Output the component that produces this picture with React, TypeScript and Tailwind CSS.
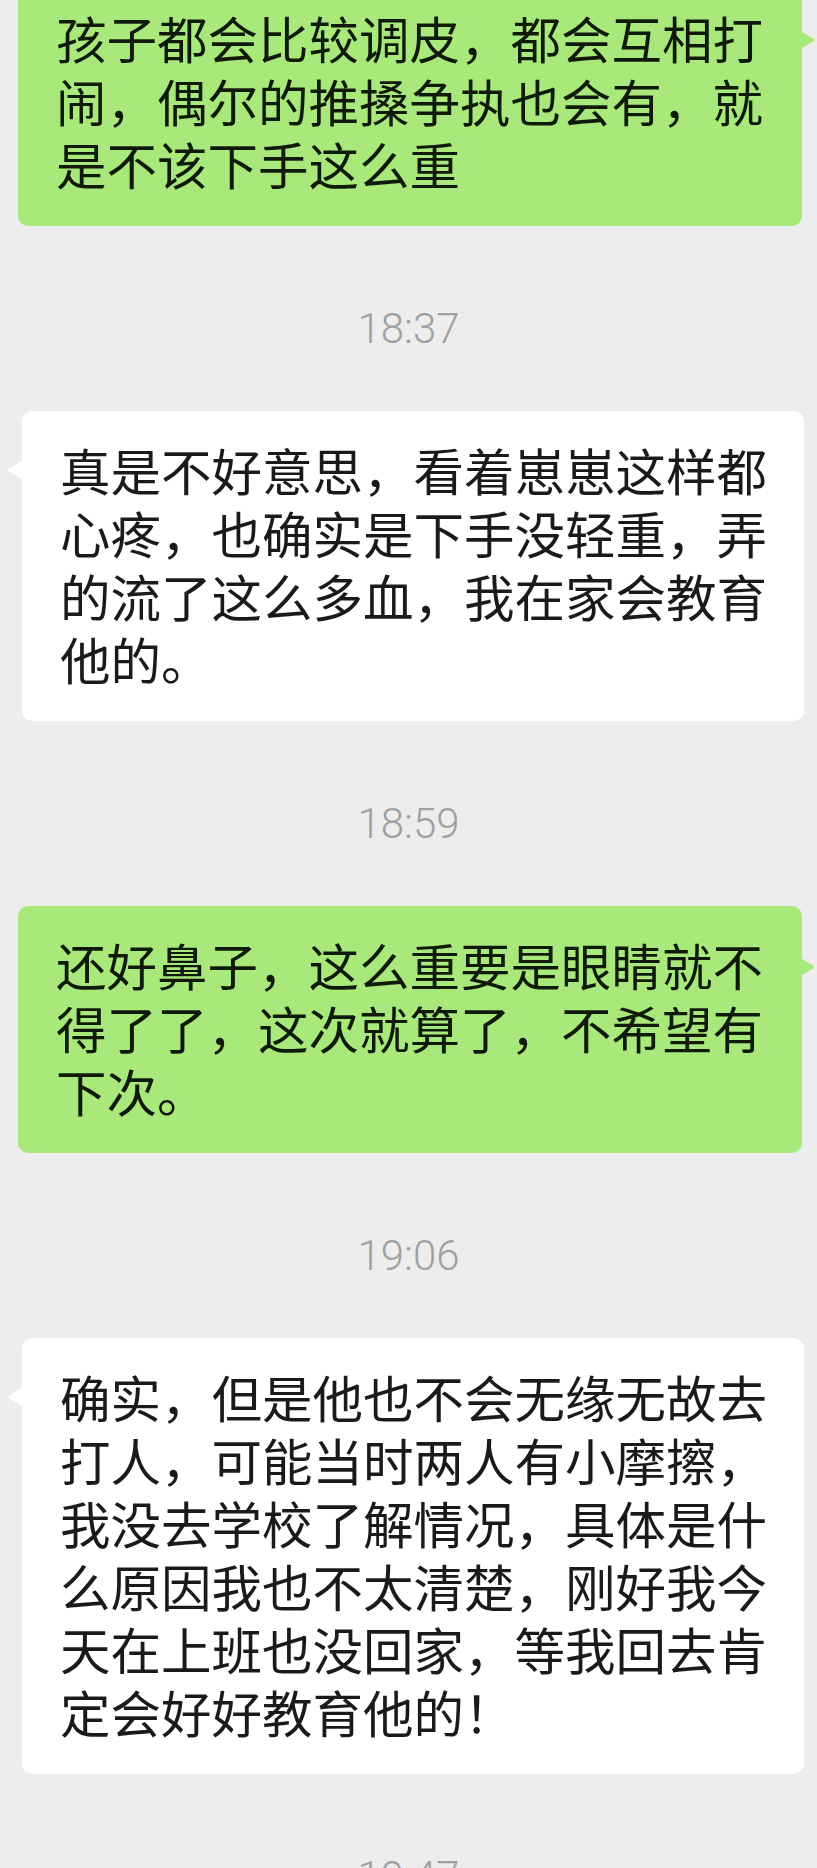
import { FC } from "react";

type Msg =
  | { kind: "time"; text: string }
  | { kind: "me" | "them"; lines: string[]; first?: boolean };

const messages: Msg[] = [
  {
    kind: "me",
    first: true,
    lines: ["孩子都会比较调皮，都会互相打", "闹，偶尔的推搡争执也会有，就", "是不该下手这么重"],
  },
  { kind: "time", text: "18:37" },
  {
    kind: "them",
    lines: ["真是不好意思，看着崽崽这样都", "心疼，也确实是下手没轻重，弄", "的流了这么多血，我在家会教育", "他的。"],
  },
  { kind: "time", text: "18:59" },
  {
    kind: "me",
    lines: ["还好鼻子，这么重要是眼睛就不", "得了了，这次就算了，不希望有", "下次。"],
  },
  { kind: "time", text: "19:06" },
  {
    kind: "them",
    lines: [
      "确实，但是他也不会无缘无故去",
      "打人，可能当时两人有小摩擦，",
      "我没去学校了解情况，具体是什",
      "么原因我也不太清楚，刚好我今",
      "天在上班也没回家，等我回去肯",
      "定会好好教育他的！",
    ],
  },
  { kind: "time", text: "19:47" },
];

const Tail: FC<{ side: "left" | "right"; color: string }> = ({ side, color }) => (
  <svg
    width="17"
    height="20"
    viewBox="0 0 17 20"
    className={
      side === "left"
        ? "absolute -left-[16px] top-[49px]"
        : "absolute -right-[14px] top-[51px] -scale-x-100"
    }
  >
    <path d="M17 0 L17 20 L3 11.4 Q1 10 3 8.6 Z" fill={color} />
  </svg>
);

const Bubble: FC<{ msg: Extract<Msg, { lines: string[] }> }> = ({ msg }) => {
  const mine = msg.kind === "me";
  return (
    <div
      className={`relative rounded-[10px] pt-[27px] pb-[31px] px-[38px] ${
        mine ? "bg-[#a9e87a] ml-[18px] mr-[15px] text-[#101a0a]" : "bg-white ml-[22px] mr-[13px] text-[#1a1a1a]"
      } ${msg.first ? "-mt-[21px]" : ""}`}
    >
      <Tail side={mine ? "right" : "left"} color={mine ? "#a9e87a" : "#ffffff"} />
      {msg.lines.map((line, i) => (
        <div key={i} className="whitespace-nowrap text-[50.5px] leading-[63px]">
          {line}
        </div>
      ))}
    </div>
  );
};

export default function App() {
  return (
    <div
      className="w-[817px] h-[1868px] overflow-hidden bg-[#ededed]"
      style={{ fontFamily: '"Noto Sans CJK SC", "Noto Sans", sans-serif' }}
    >
      {messages.map((m, i) =>
        m.kind === "time" ? (
          <div
            key={i}
            className="mt-[79px] mb-[58px] text-center text-[42px] leading-[48px] font-light text-[#a0a0a0] font-['Roboto',sans-serif]"
          >
            {m.text}
          </div>
        ) : (
          <Bubble key={i} msg={m} />
        )
      )}
    </div>
  );
}
